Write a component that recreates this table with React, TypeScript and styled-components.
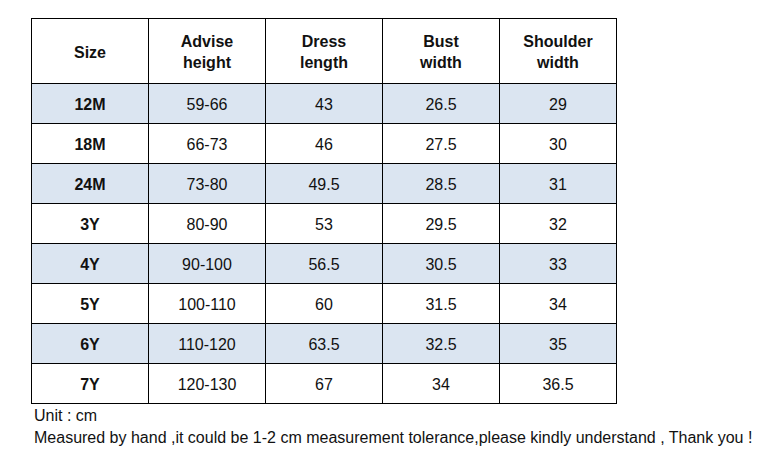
import React from "react";
import styled, { createGlobalStyle } from "styled-components";

const Global = createGlobalStyle`
  html, body { margin: 0; padding: 0; background: #ffffff; }
  body { font-family: "Liberation Sans", Arial, sans-serif; color: #000; }
`;

const Page = styled.div`
  width: 776px;
  height: 470px;
  box-sizing: border-box;
  padding: 18px 0 0 31px;
  display: flex;
  flex-direction: column;
`;

const Table = styled.table`
  border-collapse: collapse;
  table-layout: fixed;
  width: 586px;
`;

const Col = styled.col`
  width: 117px;
`;

const HeadCell = styled.th`
  border: 1px solid #000;
  height: 62px;
  padding: 2px 0 0;
  font-weight: bold;
  font-size: 16px;
  line-height: 21px;
  text-align: center;
  vertical-align: middle;
  color: #111;
`;

const Row = styled.tr<{ $shaded: boolean }>`
  background: ${(p) => (p.$shaded ? "#dbe5f1" : "#ffffff")};
`;

const Cell = styled.td<{ $bold?: boolean }>`
  border: 1px solid #000;
  height: 37px;
  padding: 2px 0 0;
  font-size: 16px;
  font-weight: ${(p) => (p.$bold ? "bold" : "normal")};
  text-align: center;
  vertical-align: middle;
  color: #111;
`;

const Notes = styled.div`
  padding-left: 3px;
  padding-top: 1px;
  font-size: 16px;
  line-height: 22px;
  color: #111;
`;

const headers = [
  ["Size"],
  ["Advise", "height"],
  ["Dress", "length"],
  ["Bust", "width"],
  ["Shoulder", "width"],
];

const rows = [
  ["12M", "59-66", "43", "26.5", "29"],
  ["18M", "66-73", "46", "27.5", "30"],
  ["24M", "73-80", "49.5", "28.5", "31"],
  ["3Y", "80-90", "53", "29.5", "32"],
  ["4Y", "90-100", "56.5", "30.5", "33"],
  ["5Y", "100-110", "60", "31.5", "34"],
  ["6Y", "110-120", "63.5", "32.5", "35"],
  ["7Y", "120-130", "67", "34", "36.5"],
];

export default function App() {
  return (
    <>
      <Global />
      <Page>
        <Table>
          <colgroup>
            {headers.map((_, i) => (
              <Col key={i} />
            ))}
          </colgroup>
          <thead>
            <tr>
              {headers.map((h, i) => (
                <HeadCell key={i}>
                  {h.map((line, j) => (
                    <React.Fragment key={j}>
                      {j > 0 && <br />}
                      {line}
                    </React.Fragment>
                  ))}
                </HeadCell>
              ))}
            </tr>
          </thead>
          <tbody>
            {rows.map((r, i) => (
              <Row key={i} $shaded={i % 2 === 0}>
                {r.map((v, j) => (
                  <Cell key={j} $bold={j === 0}>
                    {v}
                  </Cell>
                ))}
              </Row>
            ))}
          </tbody>
        </Table>
        <Notes>
          Unit : cm
          <br />
          Measured by hand ,it could be 1-2 cm measurement tolerance,please kindly understand , Thank you !
        </Notes>
      </Page>
    </>
  );
}
